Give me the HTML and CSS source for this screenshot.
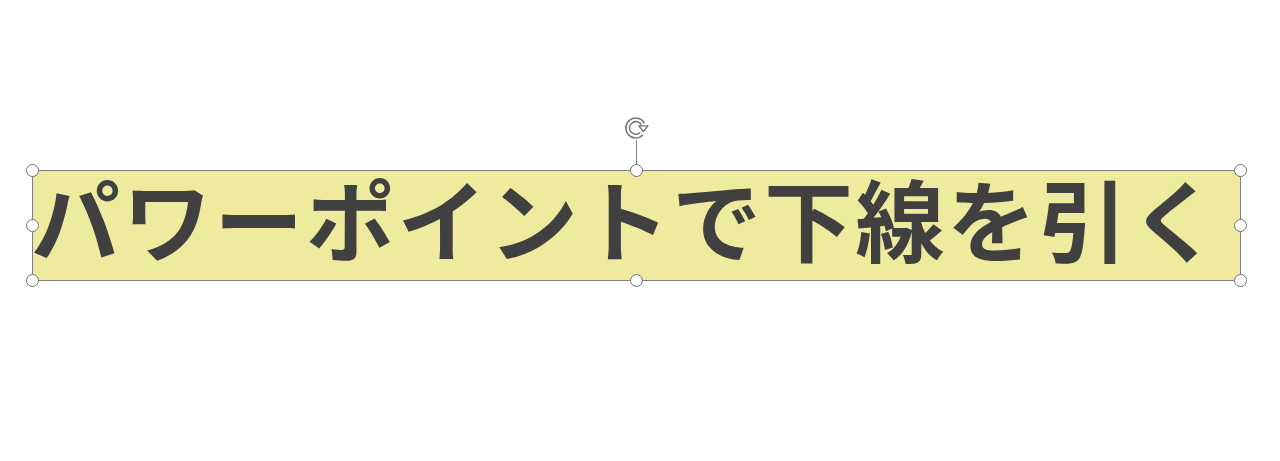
FILE: index.html
```html
<!DOCTYPE html>
<html lang="ja">
<head>
<meta charset="utf-8">
<link rel="stylesheet" href="styles.css">
</head>
<body>
<div class="canvas">
  <div class="shape">
    <div class="text">パワーポイントで下線を引く</div>
    <div class="rot-line"></div>
    <svg class="rot" width="28" height="28" viewBox="0 0 24 24">
      <path d="M15.95 16.95 A7 7 0 1 1 17.06 8.5" fill="none" stroke="#767676" stroke-width="4.4"/>
      <path d="M15.95 16.95 A7 7 0 1 1 17.06 8.5" fill="none" stroke="#ffffff" stroke-width="1.8"/>
      <path d="M13.6 10.2 L21.4 10.2 L17.5 15 Z" fill="#ffffff" stroke="#767676" stroke-width="1.2" stroke-linejoin="round"/>
    </svg>
    <span class="h tl"></span><span class="h tm"></span><span class="h tr"></span>
    <span class="h ml"></span><span class="h mr"></span>
    <span class="h bl"></span><span class="h bm"></span><span class="h br"></span>
  </div>
</div>
</body>
</html>
```
FILE: styles.css
```css
html, body { margin: 0; padding: 0; background: #ffffff; }
.canvas {
  width: 1280px;
  height: 461px;
  padding: 170px 0 0 32px;
  box-sizing: border-box;
}
.shape {
  position: relative;
  width: 1209px;
  height: 111px;
  box-sizing: border-box;
  background: #eeeb9e;
  border: 1px solid #7f7f7f;
  display: flex;
  align-items: center;
  justify-content: center;
}
.text {
  font-family: "Noto Sans CJK JP", sans-serif;
  font-weight: 700;
  font-size: 89px;
  line-height: 1;
  letter-spacing: 2.6px;
  color: #404040;
  white-space: nowrap;
  margin: 0 0 18px -20px;
}
.h {
  position: absolute;
  width: 13px;
  height: 13px;
  box-sizing: border-box;
  border: 1.5px solid #707070;
  border-radius: 50%;
  background: #ffffff;
}
.tl { left: -7px; top: -7px; }
.tm { left: 597px; top: -7px; }
.tr { right: -7px; top: -7px; }
.ml { left: -7px; top: 48px; }
.mr { right: -7px; top: 48px; }
.bl { left: -7px; bottom: -7px; }
.bm { left: 597px; bottom: -7px; }
.br { right: -7px; bottom: -7px; }
.rot-line {
  position: absolute;
  left: 603px;
  top: -31px;
  width: 1.3px;
  height: 25px;
  background: #808080;
}
.rot {
  position: absolute;
  left: 589.5px;
  top: -57px;
}
```
